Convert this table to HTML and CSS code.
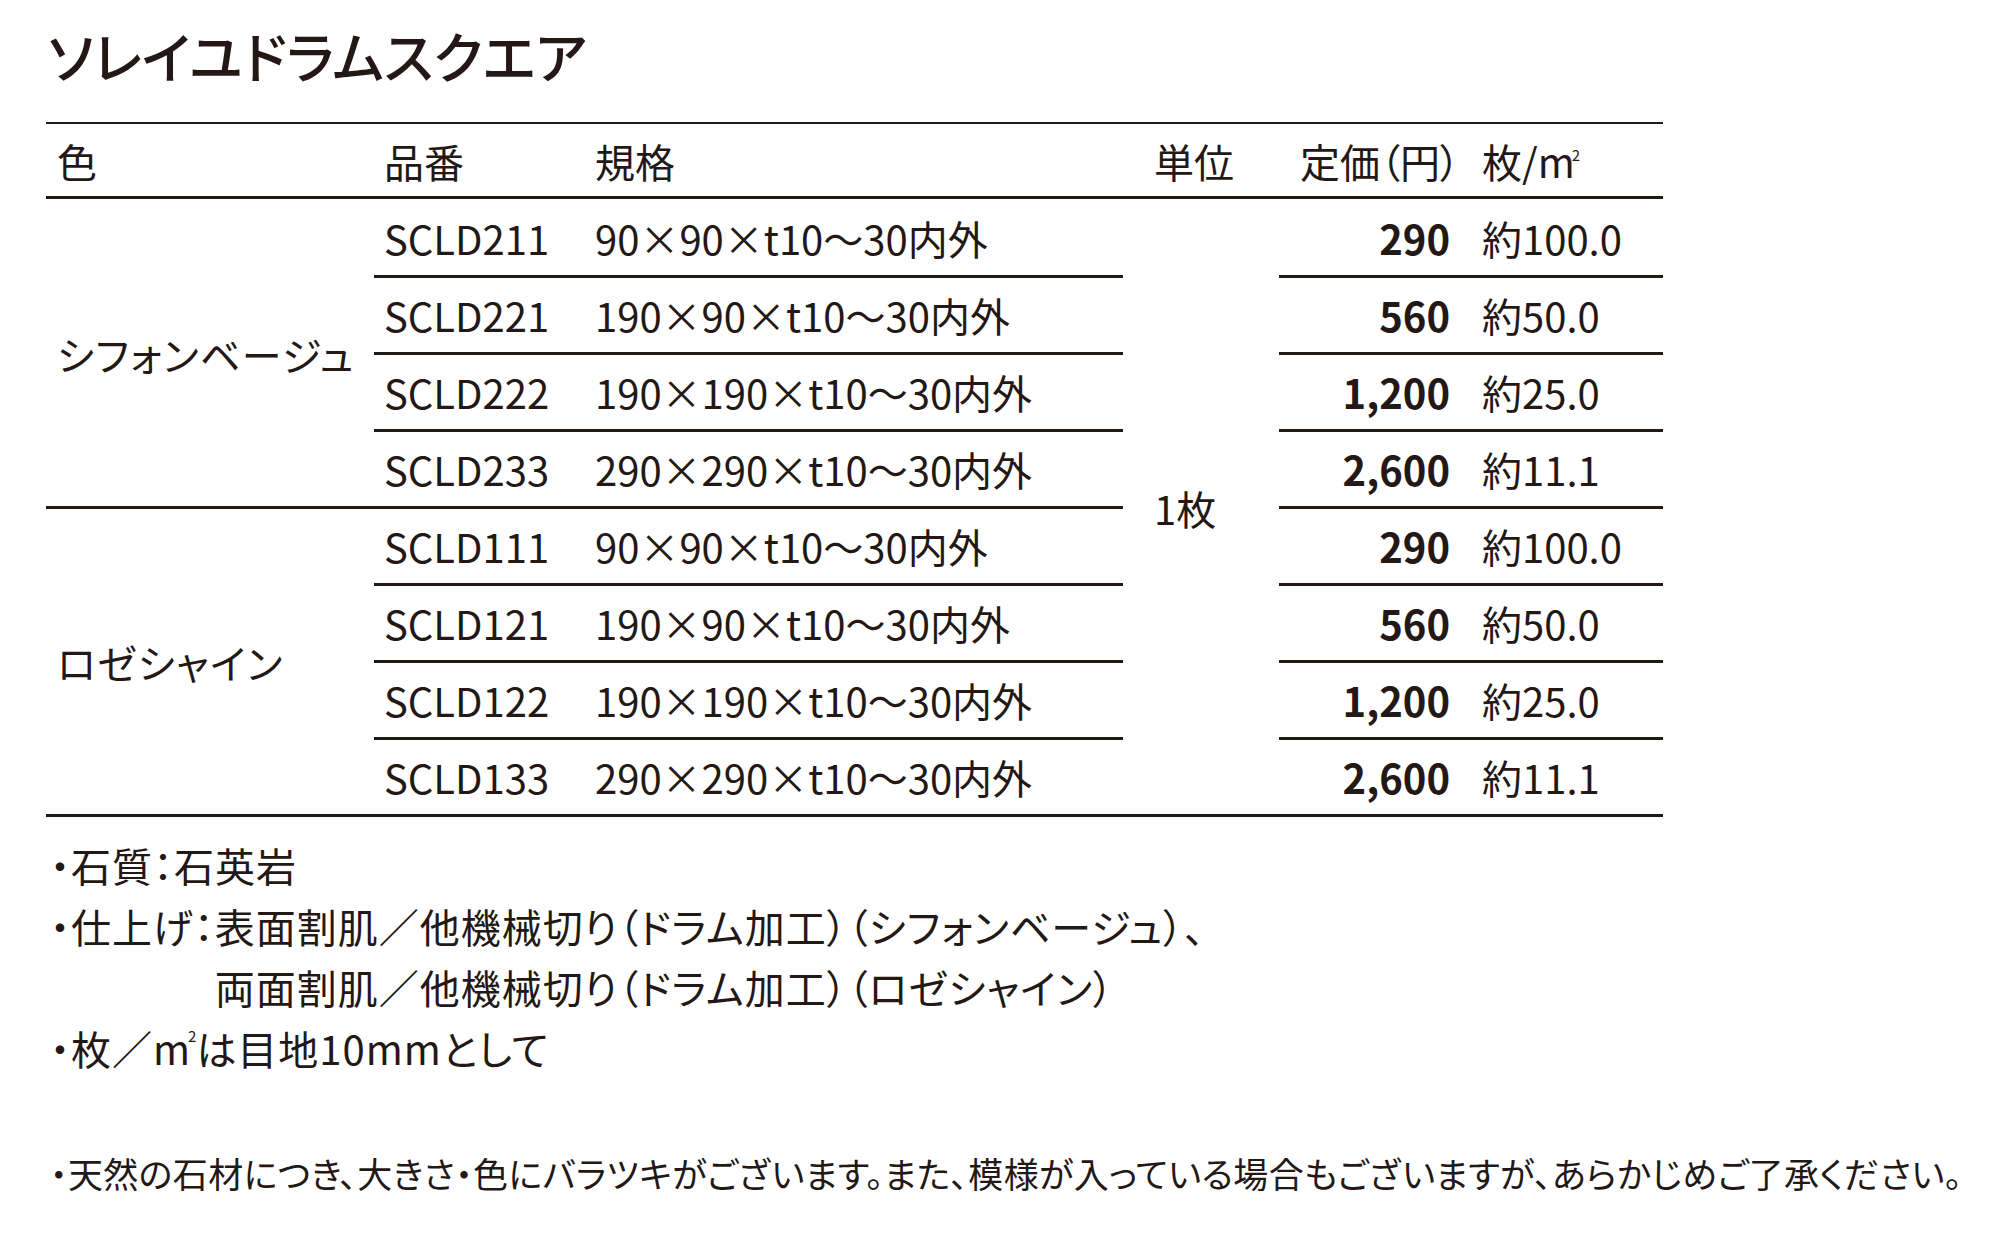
FILE: index.html
```html
<!DOCTYPE html>
<html lang="ja">
<head>
<meta charset="utf-8">
<title>ソレイユドラムスクエア</title>
<link rel="stylesheet" href="styles.css">
</head>
<body>
<div class="page">
  <h1 class="title">ソレイユドラムスクエア</h1>

  <div class="tbl">
    <div class="th c-color">色</div>
    <div class="th c-code">品番</div>
    <div class="th c-size">規格</div>
    <div class="th c-unit">単位</div>
    <div class="th c-price">定価（円）</div>
    <div class="th c-per">枚/m<span class="sq">2</span></div>

    <div class="td c-color grp">シフォンベージュ</div>
    <div class="td c-code ruled">SCLD211</div>
    <div class="td c-size ruled">90×90×t10～30内外</div>
    <div class="td c-unit unit">1枚</div>
    <div class="td c-price ruled">290</div>
    <div class="td c-per ruled">約100.0</div>

    <div class="td c-code ruled">SCLD221</div>
    <div class="td c-size ruled">190×90×t10～30内外</div>
    <div class="td c-price ruled">560</div>
    <div class="td c-per ruled">約50.0</div>

    <div class="td c-code ruled">SCLD222</div>
    <div class="td c-size ruled">190×190×t10～30内外</div>
    <div class="td c-price ruled">1,200</div>
    <div class="td c-per ruled">約25.0</div>

    <div class="td c-code ruled">SCLD233</div>
    <div class="td c-size ruled">290×290×t10～30内外</div>
    <div class="td c-price ruled">2,600</div>
    <div class="td c-per ruled">約11.1</div>

    <div class="td c-color grp">ロゼシャイン</div>
    <div class="td c-code ruled">SCLD111</div>
    <div class="td c-size ruled">90×90×t10～30内外</div>
    <div class="td c-price ruled">290</div>
    <div class="td c-per ruled">約100.0</div>

    <div class="td c-code ruled">SCLD121</div>
    <div class="td c-size ruled">190×90×t10～30内外</div>
    <div class="td c-price ruled">560</div>
    <div class="td c-per ruled">約50.0</div>

    <div class="td c-code ruled">SCLD122</div>
    <div class="td c-size ruled">190×190×t10～30内外</div>
    <div class="td c-price ruled">1,200</div>
    <div class="td c-per ruled">約25.0</div>

    <div class="td c-code ruled">SCLD133</div>
    <div class="td c-size ruled">290×290×t10～30内外</div>
    <div class="td c-price ruled">2,600</div>
    <div class="td c-per ruled">約11.1</div>
  </div>

  <ul class="notes">
    <li><span class="dot">・</span>石質：石英岩</li>
    <li><span class="dot">・</span>仕上げ：<span class="hang">表面割肌／他機械切り（ドラム加工）（シフォンベージュ）、<br>両面割肌／他機械切り（ドラム加工）（ロゼシャイン）</span></li>
    <li><span class="dot">・</span>枚／m<span class="sq">2</span>は目地10mmとして</li>
  </ul>

  <p class="caution"><span class="dot">・</span>天然の石材につき、大きさ・色にバラツキがございます。また、模様が入っている場合もございますが、あらかじめご了承ください。</p>
</div>
</body>
</html>
```

FILE: styles.css
```css
* { box-sizing: border-box; }

html, body {
  margin: 0;
  padding: 0;
  background: #ffffff;
}

body {
  color: #231815;
  font-family: "Noto Sans CJK JP", "Noto Sans", sans-serif;
  font-feature-settings: "palt";
}

.page {
  padding: 0 0 0 46px;
}

.title {
  margin: 0;
  padding: 21px 0 0 2px;
  font-size: 55px;
  line-height: 66px;
  font-weight: 500;
  letter-spacing: 0;
}

.tbl {
  margin-top: 35px;
  width: 1617px;
  display: grid;
  grid-template-columns: 328px 211px 538px 156px 184px 200px;
  grid-auto-rows: 77px;
  border-top: 2px solid #231815;
  font-size: 40px;
}

.th, .td {
  display: flex;
  align-items: center;
  white-space: nowrap;
}

.th {
  height: 75px;
  border-bottom: 3px solid #231815;
  padding-top: 2px;
}

.grp {
  grid-row: span 4;
  border-bottom: 3px solid #231815;
  letter-spacing: 1.4px;
}

.unit {
  grid-row: span 8;
  border-bottom: 3px solid #231815;
}

.ruled {
  border-bottom: 3px solid #231815;
}

.c-color { padding-left: 11px; }
.c-code  { padding-left: 10px; }
.c-size  { padding-left: 10px; }
.c-unit  { padding-left: 31px; }
.c-price { padding-left: 21px; }
.td.c-price {
  justify-content: flex-end;
  padding-right: 13px;
  font-weight: 700;
}
.c-per   { padding-left: 19px; }

.sq {
  font-size: 15px;
  line-height: 1;
  align-self: flex-start;
  margin-top: 21px;
  margin-left: -3px;
  letter-spacing: 0;
}

.notes {
  list-style: none;
  margin: 18px 0 0 0;
  padding: 0 0 0 4px;
  font-size: 40px;
  line-height: 61px;
  letter-spacing: 1px;
}

.notes li {
  display: flex;
  align-items: flex-start;
}

.notes .sq {
  margin-top: 10px;
  align-self: flex-start;
}

.hang {
  display: inline-block;
}

.caution {
  margin: 69px 0 0 0;
  padding-left: 4px;
  font-size: 35px;
  line-height: 50px;
  letter-spacing: 0.38px;
  white-space: nowrap;
}
```
